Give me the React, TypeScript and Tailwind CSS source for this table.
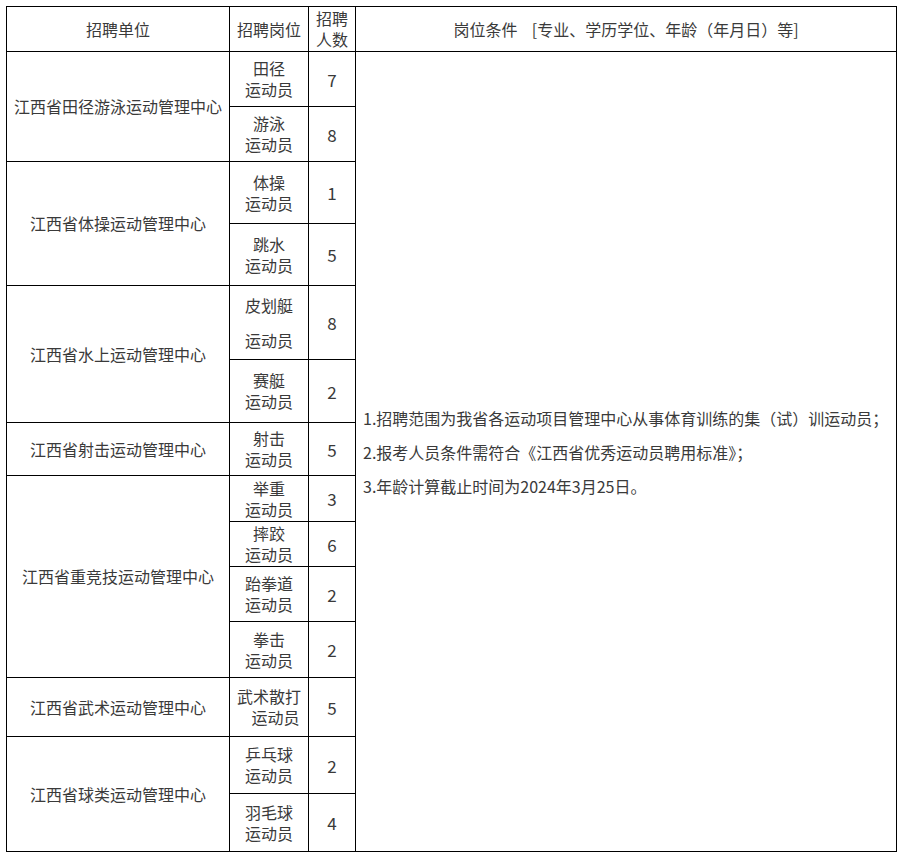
import React from "react";

type Pos = { name: React.ReactNode; n: number; h: number };
type Unit = { unit: string; rows: Pos[] };

const two = (a: string) => (
  <>
    <div>{a}</div>
    <div>运动员</div>
  </>
);

const data: Unit[] = [
  { unit: "江西省田径游泳运动管理中心", rows: [
    { name: two("田径"), n: 7, h: 55 },
    { name: two("游泳"), n: 8, h: 55 },
  ]},
  { unit: "江西省体操运动管理中心", rows: [
    { name: two("体操"), n: 1, h: 62 },
    { name: two("跳水"), n: 5, h: 62 },
  ]},
  { unit: "江西省水上运动管理中心", rows: [
    { name: (<><div className="mb-[14px]">皮划艇</div><div>运动员</div></>), n: 8, h: 74 },
    { name: two("赛艇"), n: 2, h: 63 },
  ]},
  { unit: "江西省射击运动管理中心", rows: [
    { name: two("射击"), n: 5, h: 53 },
  ]},
  { unit: "江西省重竞技运动管理中心", rows: [
    { name: two("举重"), n: 3, h: 46 },
    { name: two("摔跤"), n: 6, h: 45 },
    { name: two("跆拳道"), n: 2, h: 55 },
    { name: two("拳击"), n: 2, h: 56 },
  ]},
  { unit: "江西省武术运动管理中心", rows: [
    { name: (<><div>武术散打</div><div className="pl-[13px]">运动员</div></>), n: 5, h: 59 },
  ]},
  { unit: "江西省球类运动管理中心", rows: [
    { name: two("乒乓球"), n: 2, h: 57 },
    { name: two("羽毛球"), n: 4, h: 58 },
  ]},
];

export default function App() {
  let first = true;
  return (
    <div
      className="w-[900px] h-[857px] bg-white pt-[6px] pl-[6px] text-[16px] leading-[21px] text-[#3a3a3a]"
      style={{ fontFamily: '"Noto Sans CJK SC", "Noto Sans", sans-serif' }}
    >
      <table className="table-fixed border-collapse w-[890px]">
        <colgroup>
          <col className="w-[223px]" />
          <col className="w-[79px]" />
          <col className="w-[47px]" />
          <col className="w-[541px]" />
        </colgroup>
        <tbody>
          <tr className="h-[45px]">
            <td className="border border-black text-center align-middle p-0">招聘单位</td>
            <td className="border border-black text-center align-middle p-0">招聘岗位</td>
            <td className="border border-black text-center align-middle p-0 px-[7px]">招聘人数</td>
            <td className="border border-black text-center align-middle p-0">
              岗位条件&nbsp;&nbsp;&nbsp;&nbsp;[专业、学历学位、年龄（年月日）等]
            </td>
          </tr>
          {data.map((u) =>
            u.rows.map((r, i) => {
              const isFirst = first;
              first = false;
              return (
                <tr key={u.unit + i} style={{ height: r.h }}>
                  {i === 0 && (
                    <td rowSpan={u.rows.length} className="border border-black text-center align-middle p-0">
                      {u.unit}
                    </td>
                  )}
                  <td className="border border-black text-center align-middle p-0">{r.name}</td>
                  <td className="border border-black text-center align-middle p-0 text-[17px]">{r.n}</td>
                  {isFirst && (
                    <td rowSpan={14} className="border border-black align-middle p-0 pl-[7px]">
                      <div className="leading-[34px]">
                        <p>1.招聘范围为我省各运动项目管理中心从事体育训练的集（试）训运动员；</p>
                        <p>2.报考人员条件需符合《江西省优秀运动员聘用标准》；</p>
                        <p>3.年龄计算截止时间为2024年3月25日。</p>
                      </div>
                    </td>
                  )}
                </tr>
              );
            })
          )}
        </tbody>
      </table>
    </div>
  );
}
